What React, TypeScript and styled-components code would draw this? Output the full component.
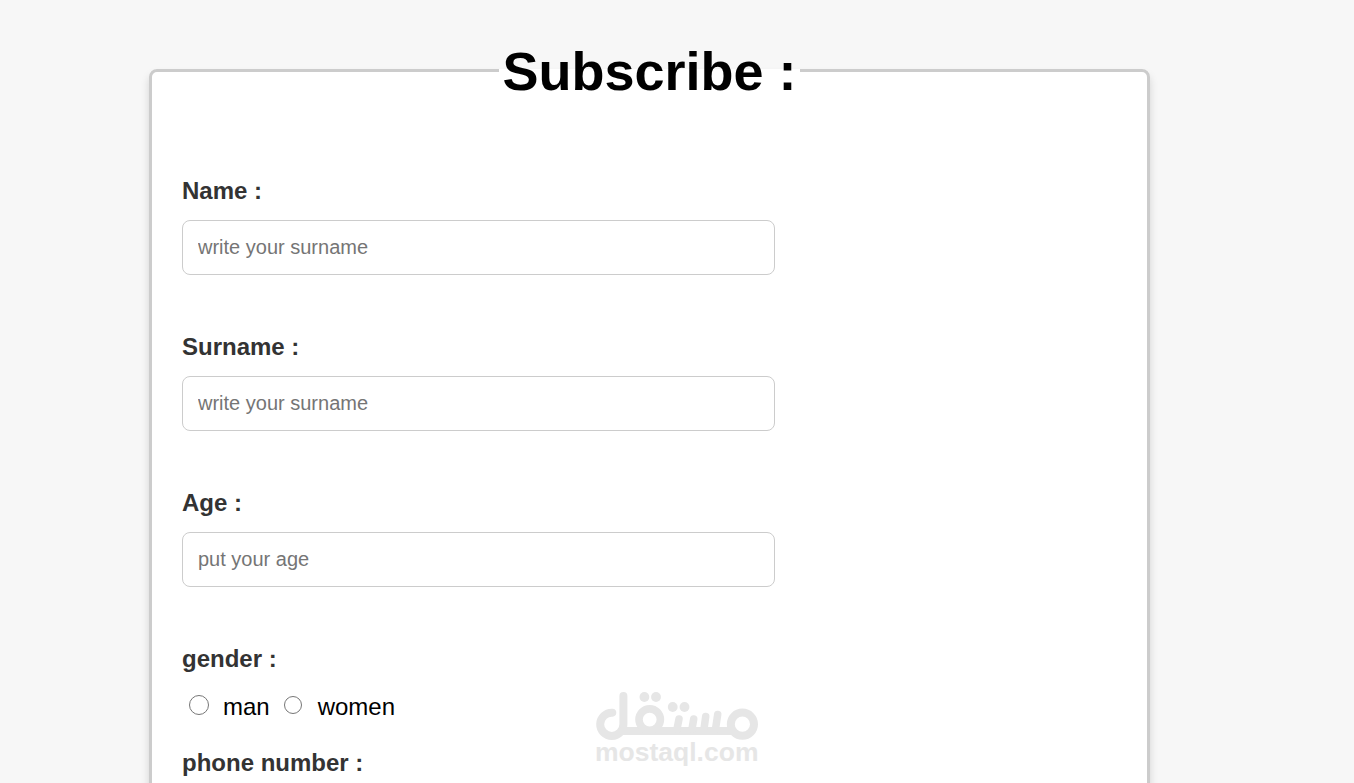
import styled, { createGlobalStyle } from "styled-components";

const textFields = [
  { id: "name", label: "Name :", placeholder: "write your surname" },
  { id: "surname", label: "Surname :", placeholder: "write your surname" },
  { id: "age", label: "Age :", placeholder: "put your age" },
];

function App() {
  return (
    <Page>
      <GlobalStyle />
      <Form>
        <Title>Subscribe :</Title>
        {textFields.map((field) => (
          <Field key={field.id}>
            <Label htmlFor={field.id}>{field.label}</Label>
            <Input id={field.id} type="text" placeholder={field.placeholder} />
          </Field>
        ))}
        <Label as="div">gender :</Label>
        <Options>
          <Radio type="radio" name="gender" id="man" $size={20} />
          <OptionText htmlFor="man">man</OptionText>
          <Radio type="radio" name="gender" id="women" $size={18} />
          <OptionText htmlFor="women">women</OptionText>
        </Options>
        <Label>phone number :</Label>
      </Form>
      <Watermark>
        <Logo />
        <span>mostaql.com</span>
      </Watermark>
    </Page>
  );
}

const Logo = () => (
  <svg
    width="164"
    height="49"
    viewBox="596 691 164 49"
    fill="none"
    stroke="#e6e6e6"
    strokeWidth="8"
    strokeLinecap="round"
    strokeLinejoin="round"
  >
    <path d="M612.3 712.7A11.6 11.6 0 1 0 623.4 724V696" />
    <path d="M622 731H731" />
    <circle cx="649.7" cy="719.6" r="10.7" strokeWidth="7.6" />
    <circle cx="742.4" cy="724.2" r="11.6" />
    <path
      d="M679 719L677 729M693.700 719L692 729M705.700 716.500L704 729M717.700 714.500L715.500 729"
      strokeWidth="7.500"
    />
    <g fill="#e6e6e6" stroke="none">
      <circle cx="644.4" cy="697" r="4.9" />
      <circle cx="656" cy="697" r="4.9" />
      <circle cx="672.7" cy="707" r="4.9" />
      <circle cx="684.5" cy="707" r="4.9" />
    </g>
  </svg>
);

const GlobalStyle = createGlobalStyle`
  * {
    box-sizing: border-box;
  }

  body {
    margin: 0;
    background: #f7f7f7;
    font-family: "Liberation Sans", Arial, sans-serif;
  }
`;

const Page = styled.div`
  height: 783px;
  padding: 40px 0 0 149px;
  overflow: hidden;
`;

const Form = styled.fieldset`
  width: 1001px;
  height: 760px;
  margin: 0;
  padding: 0 30px;
  border: 3px solid #ccc;
  border-radius: 8px;
  background: #fff;
  box-shadow: 0 6px 9px rgba(0, 0, 0, 0.15);
`;

const Title = styled.legend`
  margin: 0 auto 77px;
  padding: 2px 3.5px 0;
  font-size: 54px;
  font-weight: bold;
  line-height: 58px;
  color: #000;
`;

const Field = styled.div`
  margin-bottom: 58px;
`;

const Label = styled.label`
  display: block;
  font-size: 24px;
  font-weight: bold;
  line-height: 28px;
  color: #333;
`;

const Input = styled.input`
  display: block;
  width: 593px;
  height: 55px;
  margin-top: 15px;
  padding: 0 15px;
  border: 1px solid #ccc;
  border-radius: 8px;
  background: #fff;
  font-family: inherit;
  font-size: 20px;

  &::placeholder {
    color: #757575;
  }
`;

const Options = styled.div`
  display: flex;
  align-items: center;
  height: 28px;
  margin: 20px 0 28px;
  padding-left: 7px;
`;

const Radio = styled.input<{ $size: number }>`
  flex: none;
  width: ${({ $size }) => $size}px;
  height: ${({ $size }) => $size}px;
  margin: 0 ${({ $size }) => 34 - $size}px 4px 0;
`;

const OptionText = styled.label`
  margin-right: 14px;
  font-size: 24px;
  line-height: 28px;
  color: #000;
`;

/* sits over the form at the bottom of the window */
const Watermark = styled.div`
  position: absolute;
  top: 691px;
  left: 596px;
  display: flex;
  flex-direction: column;
  color: #e6e6e6;
  font-size: 26.5px;
  font-weight: bold;
  line-height: 24px;
  pointer-events: none;

  svg {
    display: block;
    overflow: visible;
  }

  span {
    margin-left: -1px;
  }
`;

export default App;
